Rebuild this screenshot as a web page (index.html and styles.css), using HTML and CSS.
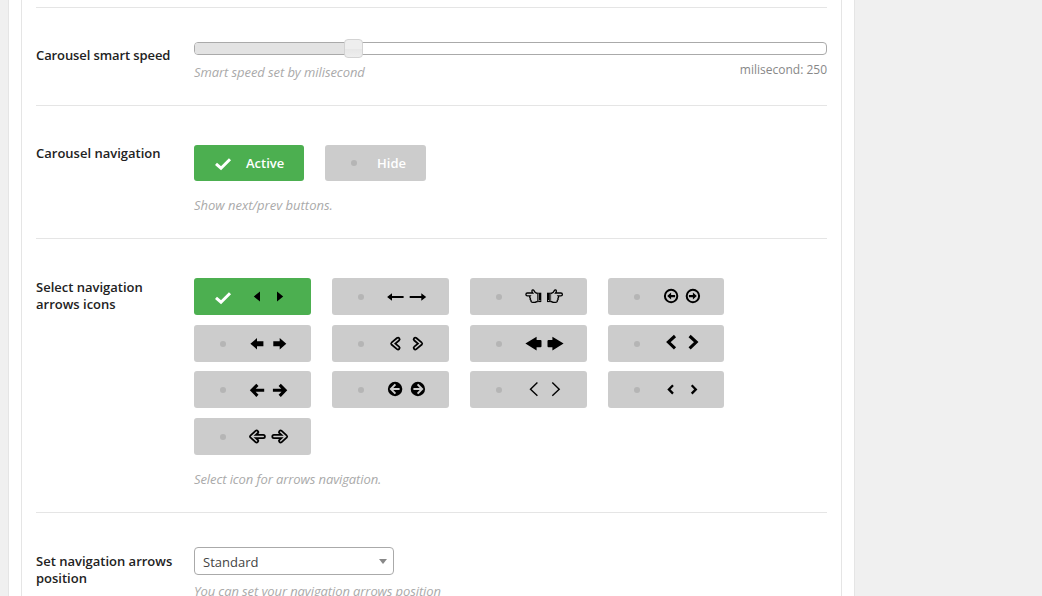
FILE: index.html
```
<!DOCTYPE html>
<html lang="en">
<head>
<meta charset="utf-8">
<title>Carousel settings</title>
<link rel="stylesheet" href="styles.css">
</head>
<body>
<div class="panel">
<div class="panel-inner">
  <section class="row row-speed">
    <div class="label">Carousel smart speed</div>
    <div class="field">
      <div class="slider"><div class="slider-fill"></div><div class="slider-handle"></div></div>
      <div class="slider-notes"><p class="hint">Smart speed set by milisecond</p><span class="value">milisecond: 250</span></div>
    </div>
  </section>
  <section class="row row-nav">
    <div class="label">Carousel navigation</div>
    <div class="field">
      <div class="toggles">
        <div class="toggle active"><svg class="check" viewBox="0 0 16 12"><path d="M1 5.8 6 10.2 15 1.2"/></svg><span>Active</span></div>
        <div class="toggle"><i class="dot"></i><span>Hide</span></div>
      </div>
      <p class="hint">Show next/prev buttons.</p>
    </div>
  </section>
  <section class="row row-icons">
    <div class="label">Select navigation arrows icons</div>
    <div class="field">
      <div class="tiles">
        <div class="tile active"><svg class="check" viewBox="0 0 16 12"><path d="M1 5.8 6 10.2 15 1.2"/></svg><svg class="pair" viewBox="52 0 46 37"><path d="M59.8 18.5 66 13.6v9.8zM89.2 18.5 83 13.6v9.8z"/></svg></div>
        <div class="tile"><i class="dot"></i><svg class="pair" viewBox="52 0 46 37"><g id="a2"><path d="M55.1 19 60 15.2V18h11.6v2H60v2.8z"/></g><use href="#a2" transform="translate(149.3 0) scale(-1 1)"/></svg></div>
        <div class="tile"><i class="dot"></i><svg class="pair" viewBox="52 0 46 37"><g id="a3"><path class="line hand" d="M67.5 15.5c-1.7-.2-3-1.3-3.6-3-.4-1-2-.9-2 .4 0 .8.3 1.5.8 2.1h-5.3c-2 0-2 2.8 0 2.8h2.8c-.8 1-.6 2 .2 2.4-.5 1-.2 1.8.6 2.2-.2 1.3.6 2 1.8 2h1.8c1.2 0 1.9-.8 2.9-.9"/><path d="M67.2 14.7h4.1v9.4h-4.1z"/><path class="cut" d="M69.4 22h.9v1h-.9zM67.9 15.6h.6v7.6h-.6z"/></g><use href="#a3" transform="translate(148.3 0) scale(-1 1)"/></svg></div>
        <div class="tile"><i class="dot"></i><svg class="pair" viewBox="52 0 46 37"><g id="a4"><circle class="line w2" cx="63.1" cy="18" r="6.2"/><path d="M59.2 18.1 63.1 14.6v2.4h4v2.2h-4v2.4z"/></g><use href="#a4" transform="translate(148 0) scale(-1 1)"/></svg></div>
        <div class="tile"><i class="dot"></i><svg class="pair" viewBox="52 0 46 37"><g id="a5"><path d="M56.4 18.7 63 13.1v3.1h6.4v5.1H63v3.1z"/></g><use href="#a5" transform="translate(148.7 0) scale(-1 1)"/></svg></div>
        <div class="tile"><i class="dot"></i><svg class="pair" viewBox="52 0 46 37"><g id="a6"><path class="line w5" d="M66 14.3 60.8 18.6l5.2 4.3"/><path class="line gap" d="M66 14.3 60.8 18.6l5.2 4.3"/></g><use href="#a6" transform="translate(149.3 0) scale(-1 1)"/></svg></div>
        <div class="tile"><i class="dot"></i><svg class="pair" viewBox="52 0 46 37"><g id="a7"><path d="M55.4 18.6 66.6 11.8v3.1h3.9q1 0 1 1v5.4q0 1-1 1h-3.9v3.1z"/></g><use href="#a7" transform="translate(149 0) scale(-1 1)"/></svg></div>
        <div class="tile"><i class="dot"></i><svg class="pair" viewBox="52 0 46 37"><g id="a8"><path class="line w3" d="M67 11 60.4 17.1l6.6 6.2"/></g><use href="#a8" transform="translate(148.6 0) scale(-1 1)"/></svg></div>
        <div class="tile"><i class="dot"></i><svg class="pair" viewBox="52 0 46 37"><g id="a9"><path class="line w3" d="M63.4 13.8 58 19.3l5.4 5.5M58.5 19.3h11.7"/></g><use href="#a9" transform="translate(149.1 0) scale(-1 1)"/></svg></div>
        <div class="tile"><i class="dot"></i><svg class="pair" viewBox="52 0 46 37"><g id="a10"><circle cx="63.1" cy="18" r="7.2"/><path class="line cutline" d="M63.4 13.4 58.9 18l4.5 4.6M59.5 18h8.1"/></g><use href="#a10" transform="translate(149 0) scale(-1 1)"/></svg></div>
        <div class="tile"><i class="dot"></i><svg class="pair" viewBox="52 0 46 37"><g id="a11"><path class="line w13" d="M67.4 11.6 60.5 18.3l6.9 6.5"/></g><use href="#a11" transform="translate(149.7 0) scale(-1 1)"/></svg></div>
        <div class="tile"><i class="dot"></i><svg class="pair" viewBox="52 0 46 37"><g id="a12"><path class="line w22" d="M65 14.3 60.9 18.4l4.1 4.2"/></g><use href="#a12" transform="translate(148.7 0) scale(-1 1)"/></svg></div>
        <div class="tile"><i class="dot"></i><svg class="pair" viewBox="52 0 46 37"><g id="a13"><path class="line w5" d="M62.6 14.1 57.7 18.5l4.9 4.4M59 18.5h10.3"/><path class="line gap" d="M62.6 14.1 57.7 18.5l4.9 4.4M59 18.5h10.3"/></g><use href="#a13" transform="translate(149.2 0) scale(-1 1)"/></svg></div>
      </div>
      <p class="hint tight">Select icon for arrows navigation.</p>
    </div>
  </section>
  <section class="row row-position">
    <div class="label">Set navigation arrows position</div>
    <div class="field">
      <div class="select"><span>Standard</span><i class="caret"></i></div>
      <p class="hint tight">You can set your navigation arrows position</p>
    </div>
  </section>
</div>
</div>
</body>
</html>
```

FILE: styles.css
```
* { box-sizing: border-box; }
body {
  margin: 0;
  height: 596px;
  overflow: hidden;
  background: #f0f0f0;
  font: 13px/17px "Open Sans", "Noto Sans", sans-serif;
  color: #23282d;
}
p { margin: 0; }
.panel {
  width: 847px;
  height: 596px;
  margin-left: 8px;
  padding: 0 12px;
  background: #fff;
  border: solid #e5e5e5;
  border-width: 0 1px;
}
.panel-inner {
  height: 596px;
  padding: 7px 14px 0;
  border: solid #e5e5e5;
  border-width: 0 1px;
  overflow: hidden;
}
.row {
  display: grid;
  grid-template-columns: 142px 633px;
  column-gap: 16px;
  align-items: start;
  border-top: 1px solid #e5e5e5;
}
.row-speed { height: 98px; padding-top: 34px; }
.row-nav { height: 133px; padding-top: 39px; }
.row-icons { height: 274px; padding-top: 39px; }
.row-position { height: 110px; padding-top: 34px; }
.label { font-weight: 600; color: #222; }
.row-speed .label { padding-top: 5px; letter-spacing: -0.1px; }
.row-icons .label { padding-top: 1px; }
.row-position .label { padding-top: 6px; }
.hint { font-style: italic; color: #aaa; }
.hint.tight { letter-spacing: -0.1px; }

.slider {
  position: relative;
  height: 13px;
  border: 1px solid #aaa;
  border-radius: 4px;
  background: #fff;
}
.slider-fill { width: 158px; height: 11px; background: #e3e3e3; border-radius: 3px 0 0 3px; }
.slider-handle {
  position: absolute;
  left: 149px;
  top: -4px;
  width: 19px;
  height: 19px;
  border: 1px solid #d3d3d3;
  border-radius: 4px;
  background: linear-gradient(#eee 50%, #e6e6e6 50%, #eee);
}
.slider-notes { display: flex; justify-content: space-between; padding-top: 6px; }
.slider-notes .hint { padding-top: 3px; letter-spacing: -0.08px; }
.value { font-size: 12px; line-height: 17px; color: #888; }

.toggles { display: flex; gap: 21px; margin-bottom: 16px; }
.toggle {
  display: flex;
  align-items: center;
  height: 36px;
  width: 101px;
  padding-left: 26px;
  border-radius: 3px;
  background: #ccc;
  color: #fff;
  font-weight: 600;
}
.toggle.active { width: 110px; padding-left: 21px; background: #4caf50; }
.toggle span { margin-left: 20px; }
.toggle.active span { margin-left: 15px; }
.dot { width: 6px; height: 6px; border-radius: 50%; background: #b5b5b5; }
.check {
  width: 16px;
  height: 12px;
  margin-top: 2px;
  fill: none;
  stroke: #fff;
  stroke-width: 3;
  overflow: visible;
}

.tiles {
  display: grid;
  grid-template-columns: repeat(4, 117px);
  grid-template-rows: 47px 46px 47px 37px;
  column-gap: 21px;
  margin-bottom: 16px;
}
.tile {
  display: flex;
  align-items: center;
  height: 37px;
  padding-left: 26px;
  border-radius: 3px;
  background: #ccc;
}
.tile:nth-child(4n) { width: 116px; }
.tile.active { padding-left: 21px; background: #4caf50; }
.tile .pair { margin-left: 20px; }
.tile.active .pair { margin-left: 15px; }
.pair { width: 46px; height: 37px; fill: #000; }
.line { fill: none; stroke: #000; }
.hand { stroke-width: 1.3; }
.cut { fill: #ccc; }
.w13 { stroke-width: 1.4; }
.w2 { stroke-width: 2; }
.w22 { stroke-width: 2.3; }
.w3 { stroke-width: 3.1; }
.w5 { stroke-width: 5; stroke-linecap: round; stroke-linejoin: round; }
.gap { stroke: #ccc; stroke-width: 1.4; stroke-linecap: round; }
.cutline { stroke: #ccc; stroke-width: 2; }

.select {
  display: flex;
  align-items: center;
  justify-content: space-between;
  width: 200px;
  height: 28px;
  margin-bottom: 8px;
  padding: 2px 6px 0 8px;
  border: 1px solid #aaa;
  border-radius: 4px;
  color: #444;
}
.caret {
  margin-top: -2px;
  border: solid transparent;
  border-width: 5px 4px 0;
  border-top-color: #888;
}
```
